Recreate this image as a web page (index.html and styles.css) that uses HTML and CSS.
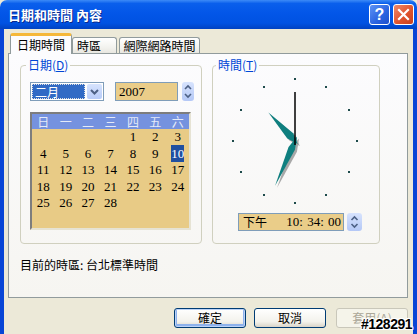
FILE: index.html
```html
<!DOCTYPE html>
<html lang="zh-Hant">
<head>
  <meta charset="UTF-8">
  <title>日期和時間 內容</title>
  <meta name="viewport" content="width=device-width, initial-scale=1.0"/>
  <link rel="stylesheet" href="styles.css">
</head>
<body>
  <div class="window">
    <div class="titlebar">
      <span class="title">日期和時間 內容</span>
      <span class="cap-btn help">?</span>
      <span class="cap-btn close">
        <svg width="13" height="13" viewBox="0 0 13 13"><path d="M2 2 L11 11 M11 2 L2 11" stroke="#fff" stroke-width="2.2" stroke-linecap="square"/></svg>
      </span>
    </div>

    <div class="frame">
      <div class="tabs">
        <div class="tab active">日期時間</div>
        <div class="tab tab-tz">時區</div>
        <div class="tab tab-net">網際網路時間</div>
      </div>

      <div class="panel">
        <div class="groups">
          <fieldset class="group group-date">
            <legend>日期(<u>D</u>)</legend>
            <div class="combo-row">
              <div class="month">
                <span class="month-text">二月</span>
                <span class="drop">
                  <svg width="15" height="15" viewBox="0 0 15 15"><polyline points="4,6 7.5,9.5 11,6" fill="none" stroke="#4D6185" stroke-width="2"/></svg>
                </span>
              </div>
              <div class="year">2007</div>
              <span class="spin">
                <svg width="12" height="19" viewBox="0 0 12 19"><polyline points="3,7 6,4 9,7" fill="none" stroke="#4D6185" stroke-width="1.6"/><polyline points="3,12 6,15 9,12" fill="none" stroke="#4D6185" stroke-width="1.6"/></svg>
              </span>
            </div>

            <div class="calendar">
              <span class="wd">日</span><span class="wd">一</span><span class="wd">二</span><span class="wd">三</span><span class="wd">四</span><span class="wd">五</span><span class="wd">六</span>
              <span></span><span></span><span></span><span></span><span>1</span><span>2</span><span>3</span>
              <span>4</span><span>5</span><span>6</span><span>7</span><span>8</span><span>9</span><span><b class="sel">10</b></span>
              <span>11</span><span>12</span><span>13</span><span>14</span><span>15</span><span>16</span><span>17</span>
              <span>18</span><span>19</span><span>20</span><span>21</span><span>22</span><span>23</span><span>24</span>
              <span>25</span><span>26</span><span>27</span><span>28</span><span></span><span></span><span></span>
            </div>
          </fieldset>

          <fieldset class="group group-time">
            <legend>時間(<u>T</u>)</legend>
            <svg class="clock" width="140" height="140" viewBox="0 0 140 140">
              <g fill="#1E4B4B">
                <rect x="69" y="6" width="2" height="2"/>
                <rect x="100" y="14" width="2" height="2"/>
                <rect x="123" y="37" width="2" height="2"/>
                <rect x="131" y="68" width="2" height="2"/>
                <rect x="123" y="99" width="2" height="2"/>
                <rect x="100" y="122" width="2" height="2"/>
                <rect x="69" y="130" width="2" height="2"/>
                <rect x="38" y="122" width="2" height="2"/>
                <rect x="15" y="99" width="2" height="2"/>
                <rect x="7" y="68" width="2" height="2"/>
                <rect x="15" y="37" width="2" height="2"/>
                <rect x="38" y="14" width="2" height="2"/>
              </g>
              <g transform="translate(72 71)">
                <polygon transform="rotate(317)" points="0,-39 4,-7 0,4 -4,-7" fill="#A8A8A8"/>
                <polygon transform="rotate(204)" points="0,-49 3.5,-8 0,5 -3.5,-8" fill="#A8A8A8"/>
              </g>
              <g transform="translate(70 69)">
                <polygon transform="rotate(317)" points="0,-39 4,-7 0,4 -4,-7" fill="#0F7F7F"/>
                <polygon transform="rotate(204)" points="0,-49 3.5,-8 0,5 -3.5,-8" fill="#0F7F7F"/>
                <line x1="0" y1="4" x2="0" y2="-49" stroke="#000" stroke-width="1.5"/>
              </g>
            </svg>
            <div class="time-row">
              <div class="time-field">
                <span class="ampm">下午</span>
                <span class="hms">10: 34: 00</span>
              </div>
              <span class="spin spin-time">
                <svg width="15" height="18" viewBox="0 0 15 18"><polyline points="4.5,7 7.5,4 10.5,7" fill="none" stroke="#4D6185" stroke-width="1.6"/><polyline points="4.5,11 7.5,14 10.5,11" fill="none" stroke="#4D6185" stroke-width="1.6"/></svg>
              </span>
            </div>
          </fieldset>
        </div>

        <p class="tz">目前的時區: 台北標準時間</p>
      </div>

      <div class="buttons">
        <button class="btn default">確定</button>
        <button class="btn cancel">取消</button>
        <button class="btn apply" disabled>套用(A)</button>
      </div>
    </div>

    <span class="stamp">#128291</span>
  </div>
</body>
</html>
```

FILE: styles.css
```css
* {
  box-sizing: border-box;
}
body {
  margin: 0;
  font-family: "Noto Sans CJK TC", sans-serif;
  font-size: 12px;
  background: #ECE9D8;
  color: #000;
}
.window {
  position: relative;
  width: 417px;
  height: 334px;
  display: flex;
  flex-direction: column;
  overflow: hidden;
}
.titlebar {
  flex: none;
  height: 29px;
  display: flex;
  align-items: center;
  padding: 0 3px 0 8px;
  border-radius: 7px 7px 0 0;
  background: linear-gradient(#3D8BF7 0, #0A5FEC 12%, #0356E8 45%, #0052E2 80%, #0042C2 100%);
  color: white;
}
.title {
  flex: 1;
  font-size: 13px;
  font-weight: bold;
  line-height: 16px;
  text-shadow: 1px 1px #0B2A8C;
}
.cap-btn {
  width: 21px;
  height: 21px;
  margin-left: 3px;
  border: 1px solid white;
  border-radius: 3px;
  display: flex;
  align-items: center;
  justify-content: center;
}
.help {
  background: linear-gradient(135deg, #5D93F5, #2A63E0 60%, #1E50CC);
  font-family: "Liberation Sans", sans-serif;
  font-size: 16px;
  font-weight: bold;
  line-height: 19px;
}
.close {
  background: linear-gradient(135deg, #EE8A6C, #E0542E 55%, #C8401E);
}
.frame {
  flex: 1;
  border-left: 4px solid #0845D6;
  border-right: 4px solid #0845D6;
  padding: 4px 5px 0 4px;
}

/* tabs */
.tabs {
  display: flex;
  align-items: flex-end;
  height: 20px;
  margin-left: 2px;
  position: relative;
  z-index: 1;
}
.tab {
  height: 16px;
  border: 1px solid #919B9C;
  border-bottom: none;
  border-radius: 3px 3px 0 0;
  background: linear-gradient(#FFFFFF, #F3F3EF 60%, #E8E7E0);
  line-height: 15px;
  text-align: center;
}
.tab.active {
  width: 62px;
  height: 21px;
  margin-bottom: -1px;
  border-top: 3px solid #F5B83A;
  background: #FCFCFE;
  line-height: 17px;
}
.tab-tz {
  width: 45px;
  text-align: left;
  padding-left: 4px;
}
.tab-net {
  width: 81px;
  margin-left: 2px;
}
.panel {
  height: 245px;
  border: 1px solid #919B9C;
  background: linear-gradient(#FCFCFE, #F6F5F1);
  padding: 4px 0 0 11px;
}

/* group boxes */
.groups {
  display: flex;
  gap: 10px;
}
.group {
  margin: 0;
  height: 186px;
  min-width: 0;
  border: 1px solid #D0D0BF;
  border-radius: 4px;
  padding: 10px 0 0 9px;
}
.group legend {
  margin-left: -4px;
  padding: 0 2px;
  line-height: 14px;
  color: #0046D5;
}
.group-date {
  width: 182px;
}
.group-time {
  width: 168px;
  padding: 0;
}
.group-time legend {
  margin-left: 3px;
}
.combo-row {
  display: flex;
  align-items: center;
  height: 19px;
}
.month {
  width: 74px;
  height: 19px;
  border: 1px solid #7F9DB9;
  background: white;
  display: flex;
  padding: 1px;
}
.month-text {
  flex: 1;
  background: #316AC5;
  color: white;
  outline: 1px dotted #E0E0E0;
  outline-offset: -1px;
  line-height: 15px;
  padding-left: 3px;
}
.drop {
  width: 15px;
  margin-left: 2px;
  border-radius: 2px;
  background: linear-gradient(#D7E3FD, #B8CCF9);
  display: flex;
}
.year {
  width: 63px;
  height: 19px;
  margin-left: 11px;
  border: 1px solid #7F9DB9;
  background: #EACD89;
  font-family: "Liberation Serif", serif;
  font-size: 13px;
  line-height: 17px;
  padding-left: 3px;
}
.spin {
  width: 12px;
  height: 19px;
  margin-left: 4px;
  border-radius: 3px;
  background: linear-gradient(#D7E3FD, #B4C8F6);
  display: flex;
}
.calendar {
  margin-top: 11px;
  width: 161px;
  height: 118px;
  border: 2px solid;
  border-color: #7D7D7D #E6E3D4 #E6E3D4 #7D7D7D;
  background: #E8CB86;
  display: grid;
  grid-template-columns: repeat(7, 1fr);
  grid-template-rows: 15px;
  grid-auto-rows: 16.5px;
  font-family: "Liberation Serif", serif;
  font-size: 13px;
  text-align: center;
  color: #000;
}
.calendar span {
  line-height: 16px;
}
.calendar .wd {
  background: #7592DF;
  color: #E4EAF8;
  font-family: "Noto Sans CJK TC", sans-serif;
  font-size: 12px;
  line-height: 15px;
}
.sel {
  font-weight: normal;
  background: #1F4FA0;
  color: white;
  padding: 1px 0;
}

/* clock */
.clock {
  display: block;
  margin-left: 12px;
}
.time-row {
  display: flex;
  margin: 1px 0 0 25px;
}
.time-field {
  width: 106px;
  height: 18px;
  border: 1px solid #7F9DB9;
  background: #EACD89;
  display: flex;
  justify-content: space-between;
  padding: 0 2px 0 4px;
  line-height: 16px;
  white-space: nowrap;
}
.ampm {
  flex: none;
}
.hms {
  flex: none;
  font-family: "Liberation Serif", serif;
  font-size: 13px;
  word-spacing: 1px;
}
.spin-time {
  width: 15px;
  height: 18px;
  margin-left: 3px;
}
.tz {
  margin: 14px 0 0;
  line-height: 14px;
}

/* buttons */
.buttons {
  display: flex;
  justify-content: flex-end;
  margin-top: 10px;
}
.btn {
  width: 72px;
  height: 20px;
  margin-left: 8px;
  border: 1px solid #003C74;
  border-radius: 3px;
  background: linear-gradient(#FFFFFF, #F3F2EC 70%, #D9D4C8);
  font-family: "Noto Sans CJK TC", sans-serif;
  font-size: 12px;
  line-height: 16px;
  padding: 0;
  color: #000;
}
.btn.default {
  box-shadow: inset 0 0 0 1px #BCD3F7, inset 0 -1px 0 2px #8EB2EC;
}
.btn.apply {
  margin-left: 10px;
  border-color: #C9C7BA;
  background: #F5F4EA;
  color: #ACA899;
}
.stamp {
  position: absolute;
  right: 5px;
  bottom: 2px;
  font-family: "Liberation Sans", sans-serif;
  font-size: 14px;
  font-weight: bold;
  letter-spacing: -0.5px;
  color: #000;
  text-shadow: 1px 0 #fff, -1px 0 #fff, 0 1px #fff, 0 -1px #fff, 1px 1px #fff, -1px -1px #fff, 1px -1px #fff, -1px 1px #fff;
}
```
